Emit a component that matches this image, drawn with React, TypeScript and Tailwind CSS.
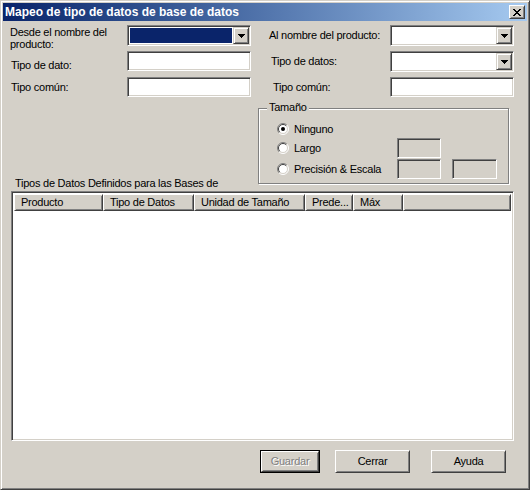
import React from "react";

const sunken =
  "border border-t-[#808080] border-l-[#808080] border-b-white border-r-white shadow-[inset_1px_1px_0_#404040,inset_-1px_-1px_0_#d4d0c8]";
const raisedCtl =
  "border border-t-[#d4d0c8] border-l-[#d4d0c8] border-b-[#404040] border-r-[#404040] shadow-[inset_1px_1px_0_#fff,inset_-1px_-1px_0_#808080]";
const raisedBtn =
  "border border-t-white border-l-white border-b-[#404040] border-r-[#404040] shadow-[inset_1px_1px_0_#d4d0c8,inset_-1px_-1px_0_#808080]";

const DownArrow = () => (
  <svg width="7" height="4" viewBox="0 0 7 4" shapeRendering="crispEdges">
    <rect x="0" y="0" width="7" height="1" fill="#000" />
    <rect x="1" y="1" width="5" height="1" fill="#000" />
    <rect x="2" y="2" width="3" height="1" fill="#000" />
    <rect x="3" y="3" width="1" height="1" fill="#000" />
  </svg>
);

const CloseGlyph = () => (
  <svg width="8" height="7" viewBox="0 0 8 7" shapeRendering="crispEdges">
    <path
      d="M0 0h2v1h-2zM6 0h2v1h-2zM1 1h2v1h-2zM5 1h2v1h-2zM2 2h4v1h-4zM3 3h2v1h-2zM2 4h4v1h-4zM1 5h2v1h-2zM5 5h2v1h-2zM0 6h2v1h-2zM6 6h2v1h-2z"
      fill="#000"
    />
  </svg>
);

const Radio = ({ checked }: { checked?: boolean }) => (
  <svg width="12" height="12" viewBox="0 0 12 12">
    <circle cx="6" cy="6" r="5" fill="#fff" />
    <path d="M2.1 9.9A5.5 5.5 0 0 1 9.9 2.1" stroke="#808080" fill="none" />
    <path d="M9.9 2.1A5.5 5.5 0 0 1 2.1 9.9" stroke="#fff" fill="none" />
    <path d="M2.8 9.2A4.5 4.5 0 0 1 9.2 2.8" stroke="#404040" fill="none" />
    <path d="M9.2 2.8A4.5 4.5 0 0 1 2.8 9.2" stroke="#d4d0c8" fill="none" />
    {checked && <circle cx="6" cy="6" r="2" fill="#000" />}
  </svg>
);

const Combo = ({ selected }: { selected?: boolean }) => (
  <div className={`w-[124px] h-[21px] bg-white p-[1px] flex ${sunken}`}>
    <div className={`flex-1 m-[1px] ${selected ? "bg-[#0a246a]" : ""}`} />
    <div className={`w-[16px] h-full bg-[#d4d0c8] flex items-center justify-center ${raisedCtl}`}>
      <DownArrow />
    </div>
  </div>
);

const Edit = ({ w = "w-[124px]", disabled }: { w?: string; disabled?: boolean }) => (
  <div className={`${w} h-[20px] ${disabled ? "bg-[#d4d0c8]" : "bg-white"} ${sunken}`} />
);

const Button = ({ label, w = "w-[75px]", isDefault, disabled }: { label: string; w?: string; isDefault?: boolean; disabled?: boolean }) => (
  <div className={`${w} h-[23px] ${isDefault ? "border border-black" : ""}`}>
    <div className={`w-full h-full flex items-center justify-center ${raisedBtn}`}>
      <span className={disabled ? "text-[#808080] [text-shadow:1px_1px_0_#fff]" : ""}>{label}</span>
    </div>
  </div>
);

const columns = [
  { label: "Producto", w: "w-[89px]" },
  { label: "Tipo de Datos", w: "w-[91px]" },
  { label: "Unidad de Tamaño", w: "w-[111px]" },
  { label: "Prede...", w: "w-[48px]" },
  { label: "Máx", w: "w-[50px]" },
];

export default function App() {
  return (
    <div className="w-[530px] h-[490px] bg-[#d4d0c8] text-black text-[11px] tracking-[-0.25px] font-['Liberation_Sans',Arial,sans-serif] border border-t-[#d4d0c8] border-l-[#d4d0c8] border-r-[#404040] border-b-[#404040] shadow-[inset_1px_1px_0_#fff,inset_-1px_-1px_0_#808080] p-[2px] flex flex-col">
      {/* title bar */}
      <div className="h-[18px] shrink-0 flex items-center bg-gradient-to-r from-[#0a246a] to-[#a6caf0] pl-[2px] pr-[2px]">
        <span className="flex-1 text-white font-bold text-[12px] tracking-normal leading-none">
          Mapeo de tipo de datos de base de datos
        </span>
        <div className={`w-[16px] h-[14px] bg-[#d4d0c8] flex items-center justify-center ${raisedBtn}`}>
          <CloseGlyph />
        </div>
      </div>

      {/* row 1 */}
      <div className="flex h-[21px] mt-[4px]">
        <div className="w-[124px] pl-[7px] pt-[1px] leading-[12px]">
          Desde el nombre del
          <br />
          producto:
        </div>
        <Combo selected />
        <div className="w-[139px] pl-[18px] flex items-center">Al nombre del producto:</div>
        <Combo />
      </div>

      {/* row 2 */}
      <div className="flex h-[21px] mt-[5px]">
        <div className="w-[124px] pl-[8px] flex items-center mt-[7px]">Tipo de dato:</div>
        <Edit />
        <div className="w-[139px] pl-[20px] flex items-center">Tipo de datos:</div>
        <Combo />
      </div>

      {/* row 3 */}
      <div className="flex h-[20px] mt-[5px]">
        <div className="w-[124px] pl-[8px] flex items-center">Tipo común:</div>
        <Edit />
        <div className="w-[139px] pl-[22px] flex items-center">Tipo común:</div>
        <Edit />
      </div>

      {/* group box */}
      <div className="ml-[255px] mt-[11px] w-[251px] h-[76px] relative border border-[#808080] shadow-[inset_1px_1px_0_#fff,1px_1px_0_#fff]">
        <span className="absolute left-[8px] -top-[8px] px-[2px] bg-[#d4d0c8] leading-[13px]">Tamaño</span>
        <div className="flex flex-col pl-[18px] pt-[10px]">
          <div className="flex items-center h-[20px]">
            <div className="w-[120px] flex items-center gap-[5px]">
              <Radio checked />
              <span>Ninguno</span>
            </div>
          </div>
          <div className="flex items-center h-[20px] -mt-[1px]">
            <div className="w-[120px] flex items-center gap-[5px]">
              <Radio />
              <span>Largo</span>
            </div>
            <Edit w="w-[44px]" disabled />
          </div>
          <div className="flex items-center h-[20px] mt-[1px]">
            <div className="w-[120px] flex items-center gap-[5px]">
              <Radio />
              <span>Precisión &amp; Escala</span>
            </div>
            <Edit w="w-[44px]" disabled />
            <Edit w="w-[45px] ml-[11px]" disabled />
          </div>
        </div>
      </div>

      {/* list label */}
      <div className="ml-[12px] mt-[-7px] w-[210px] h-[15px] overflow-hidden leading-[12px]">
        Tipos de Datos Definidos para las Bases de Datos:
      </div>

      {/* list view */}
      <div className={`ml-[8px] -mt-[1px] w-[503px] h-[250px] bg-white p-[1px] flex flex-col ${sunken}`}>
        <div className="flex h-[17px] shrink-0 m-[1px] mb-0">
          {columns.map((c) => (
            <div key={c.label} className={`${c.w} h-full bg-[#d4d0c8] pl-[6px] flex items-center whitespace-nowrap ${raisedBtn}`}>
              {c.label}
            </div>
          ))}
          <div className={`flex-1 h-full bg-[#d4d0c8] ${raisedBtn}`} />
        </div>
      </div>

      {/* buttons */}
      <div className="flex mt-[9px] pl-[257px]">
        <Button label="Guardar" w="w-[60px]" isDefault disabled />
        <div className="ml-[15px]">
          <Button label="Cerrar" />
        </div>
        <div className="ml-[21px]">
          <Button label="Ayuda" />
        </div>
      </div>
    </div>
  );
}
